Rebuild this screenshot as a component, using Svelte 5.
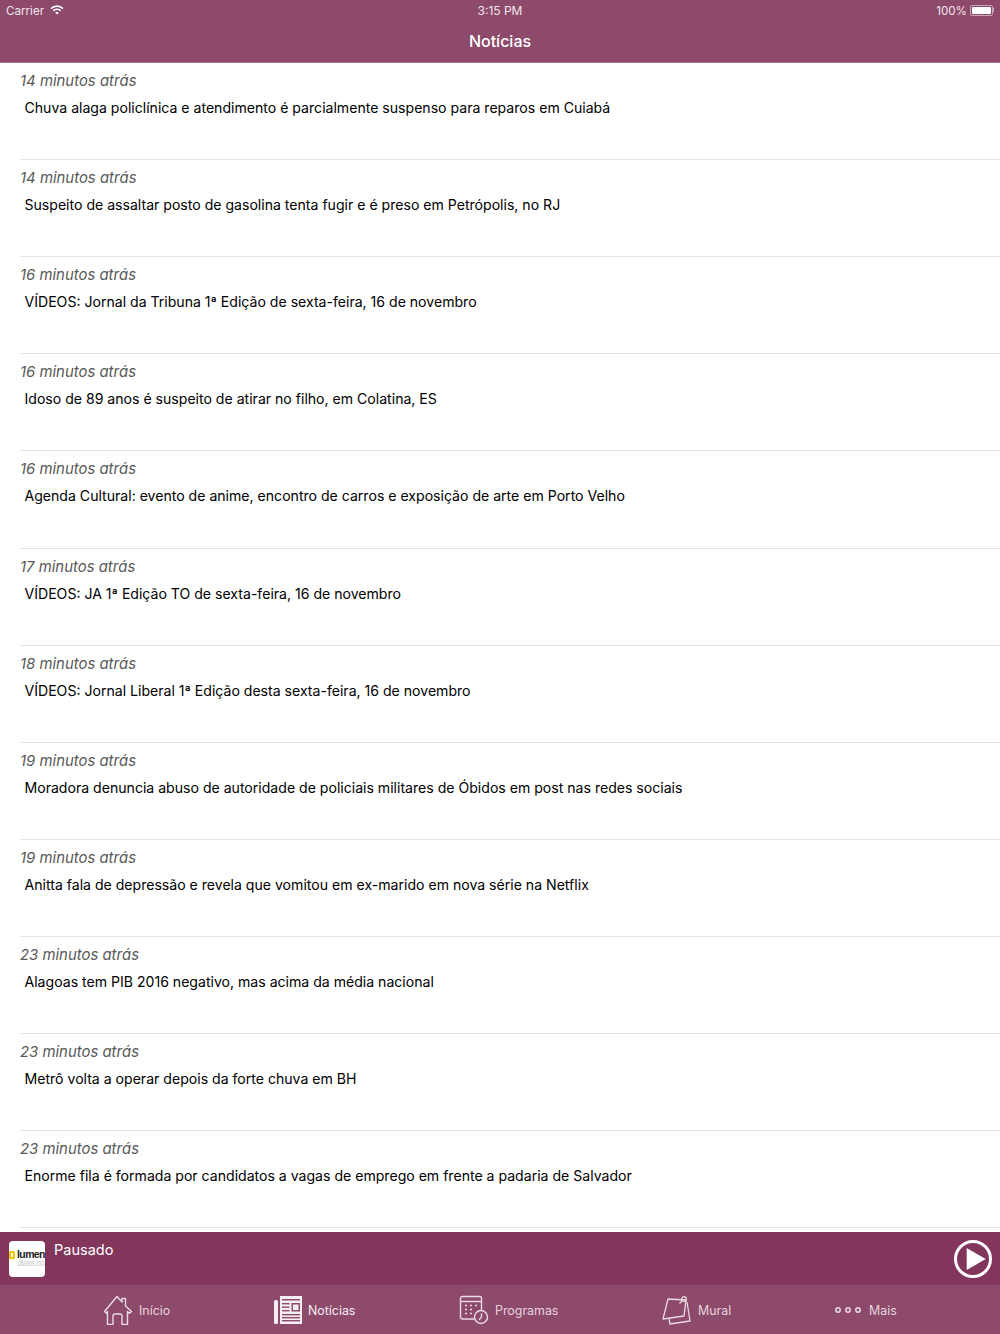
<script>
const news = [
  ["14 minutos atrás", "Chuva alaga policlínica e atendimento é parcialmente suspenso para reparos em Cuiabá"],
  ["14 minutos atrás", "Suspeito de assaltar posto de gasolina tenta fugir e é preso em Petrópolis, no RJ"],
  ["16 minutos atrás", "VÍDEOS: Jornal da Tribuna 1ª Edição de sexta-feira, 16 de novembro"],
  ["16 minutos atrás", "Idoso de 89 anos é suspeito de atirar no filho, em Colatina, ES"],
  ["16 minutos atrás", "Agenda Cultural: evento de anime, encontro de carros e exposição de arte em Porto Velho"],
  ["17 minutos atrás", "VÍDEOS: JA 1ª Edição TO de sexta-feira, 16 de novembro"],
  ["18 minutos atrás", "VÍDEOS: Jornal Liberal 1ª Edição desta sexta-feira, 16 de novembro"],
  ["19 minutos atrás", "Moradora denuncia abuso de autoridade de policiais militares de Óbidos em post nas redes sociais"],
  ["19 minutos atrás", "Anitta fala de depressão e revela que vomitou em ex-marido em nova série na Netflix"],
  ["23 minutos atrás", "Alagoas tem PIB 2016 negativo, mas acima da média nacional"],
  ["23 minutos atrás", "Metrô volta a operar depois da forte chuva em BH"],
  ["23 minutos atrás", "Enorme fila é formada por candidatos a vagas de emprego em frente a padaria de Salvador"]
];
</script>

<div class="screen">
  <header class="top">
    <div class="status">
      <div class="status-left">
        <span class="status-text">Carrier</span>
        <svg width="14" height="10" viewBox="0 0 14 10" fill="none" stroke="#fff" stroke-width="1.6">
          <path d="M1 3.6a8.6 8.6 0 0 1 12 0"/>
          <path d="M3.2 5.8a5.4 5.4 0 0 1 7.6 0"/>
          <path d="M7 9.6 5.2 7.7a2.6 2.6 0 0 1 3.6 0z" fill="#fff" stroke="none"/>
        </svg>
      </div>
      <span class="clock">3:15 PM</span>
      <div class="status-right">
        <span class="status-text">100%</span>
        <span class="battery"><span class="battery-fill"></span></span>
        <span class="battery-tip"></span>
      </div>
    </div>
    <h1>Notícias</h1>
  </header>

  <main class="list">
    {#each news as [time, title]}
      <article class="row">
        <div class="time">{time}</div>
        <div class="title">{title}</div>
      </article>
    {/each}
  </main>

  <section class="player">
    <div class="logo">
      <span class="logo-mark"></span>
      <div class="logo-text">
        <span class="logo-name">lumen</span>
        <span class="logo-sub">dlass.co</span>
      </div>
    </div>
    <span class="paused">Pausado</span>
    <svg class="play" width="40" height="40" viewBox="0 0 40 40">
      <circle cx="20" cy="20" r="17.5" fill="none" stroke="#fff" stroke-width="3"/>
      <path d="M13.7 9 32.7 20 13.7 31z" fill="#fff"/>
    </svg>
  </section>

  <nav class="tabs">
    <div class="tab home">
      <svg width="30" height="30" viewBox="0 0 30 30" fill="none" stroke="#e9dbe3" stroke-width="1.4" stroke-linejoin="round">
        <path d="M1.500 16.500 14 1.500l5 5.500V3.500h3.500V11l6 5.500-2 1.800-2-1.800v13H19V21a2 2 0 0 0-2-2h-5a2 2 0 0 0-2 2v8.500H4.500v-13l-1 1.800z"/>
      </svg>
      <span>Início</span>
    </div>
    <div class="tab news">
      <svg width="28" height="28" viewBox="0 0 28 28">
        <rect x="0" y="4" width="4" height="24" rx="1.500" fill="#f4edf1"/>
        <path d="M6 0h22v28H6z" fill="#f4edf1"/>
        <g fill="#8e4a6b">
          <rect x="8" y="3" width="18" height="1.500"/>
          <rect x="8" y="7" width="7.500" height="1.400"/>
          <rect x="8" y="10.500" width="7.500" height="1.400"/>
          <rect x="8" y="14" width="7.500" height="1.400"/>
          <rect x="8" y="18" width="18" height="1.400"/>
          <rect x="8" y="21" width="18" height="1.400"/>
          <rect x="8" y="24" width="18" height="1.400"/>
          <path fill-rule="evenodd" d="M17.500 7h8.500v8.500h-8.500zM19 8.500v5.500h5.500V8.500z"/>
        </g>
      </svg>
      <span>Notícias</span>
    </div>
    <div class="tab programs">
      <svg width="30" height="30" viewBox="0 0 30 30" fill="none" stroke="#e9dbe3" stroke-width="1.400">
        <path d="M15.500 24H3.500a2 2 0 0 1-2-2V3.500a2 2 0 0 1 2-2h17a2 2 0 0 1 2 2V15.500"/>
        <path d="M1.500 6.500h21"/>
        <path d="M6 10.500h2M11 10.500h2M16 10.500h2M6 14.500h2M11 14.500h2M6 18.500h2M11 18.500h2" stroke-width="1.600"/>
        <circle cx="22" cy="22" r="6.500"/>
        <path d="M22.500 22 20 25M22.500 22v-3.500"/>
      </svg>
      <span>Programas</span>
    </div>
    <div class="tab mural">
      <svg width="30" height="30" viewBox="0 0 30 30" fill="none" stroke="#e9dbe3" stroke-width="1.300" stroke-linejoin="round">
        <path d="M6 4 24 5 22 21 1 24z"/>
        <path d="M25 7 28 26 8 29 7 24"/>
        <circle cx="22" cy="4" r="2.300"/>
        <path d="M20.500 5.500 17.500 8.500"/>
      </svg>
      <span>Mural</span>
    </div>
    <div class="tab more">
      <svg width="28" height="8" viewBox="0 0 28 8" fill="none" stroke="#e9dbe3" stroke-width="1.500">
        <circle cx="4" cy="4" r="2.200"/>
        <circle cx="14" cy="4" r="2.200"/>
        <circle cx="24" cy="4" r="2.200"/>
      </svg>
      <span>Mais</span>
    </div>
  </nav>
</div>

<style>
:global(body) {
  margin: 0;
  background: #fff;
}
.screen {
  display: flex;
  flex-direction: column;
  width: 1000px;
  height: 1334px;
  overflow: hidden;
  font-family: Inter, "Liberation Sans", sans-serif;
}
.top {
  flex: none;
  box-sizing: border-box;
  height: 63px;
  background: #8e4a6b;
  border-bottom: 1px solid #a8708c;
  color: #fff;
}
.status {
  display: flex;
  justify-content: space-between;
  align-items: center;
  height: 20px;
  padding: 0 6px;
  font-size: 11.6px;
  color: #f0e6eb;
  position: relative;
}
.status-left, .status-right {
  display: flex;
  align-items: center;
}
.status-left {
  gap: 6px;
}
.status-text {
  padding-top: 1px;
}
.clock {
  position: absolute;
  left: 0;
  right: 0;
  text-align: center;
  font-size: 12px;
}
.battery {
  display: block;
  box-sizing: border-box;
  width: 23px;
  height: 11px;
  margin-left: 3px;
  padding: 1px;
  border: 1px solid #c9a6b7;
  border-radius: 2px;
}
.battery-fill {
  display: block;
  height: 100%;
  background: #fff;
  border-radius: 1px;
}
.battery-tip {
  width: 1px;
  height: 4px;
  background: #c9a6b7;
}
h1 {
  margin: 0;
  padding-top: 2px;
  text-align: center;
  font-size: 16px;
  line-height: 38px;
  font-weight: 500;
}
.list {
  flex: none;
  height: 1169px;
  overflow: hidden;
}
.row {
  box-sizing: border-box;
  height: 97.11px;
  margin-left: 20px;
  padding-top: 9px;
  border-bottom: 1px solid #e3e3e3;
}
.time {
  font-size: 14.9px;
  line-height: 19px;
  font-style: italic;
  color: #595959;
}
.title {
  margin-top: 7px;
  margin-left: 4.5px;
  font-size: 14.08px;
  line-height: 19px;
  color: #000;
}
.player {
  flex: none;
  display: flex;
  align-items: flex-start;
  height: 53px;
  padding-left: 9px;
  background: #82365c;
  position: relative;
}
.logo {
  display: flex;
  align-items: center;
  box-sizing: border-box;
  flex: none;
  width: 36px;
  height: 36px;
  margin-top: 9px;
  background: #fff;
  border-radius: 4px;
  overflow: hidden;
}
.logo-mark {
  flex: none;
  box-sizing: border-box;
  width: 6px;
  height: 8px;
  margin-top: -8px;
  border: 2px solid #f5c400;
  border-radius: 1px;
}
.logo-text {
  display: flex;
  flex-direction: column;
  margin-left: 2px;
  font-family: "Liberation Sans", sans-serif;
  line-height: 9px;
}
.logo-name {
  font-size: 10.5px;
  font-weight: 700;
  letter-spacing: -0.6px;
  color: #222;
}
.logo-sub {
  font-size: 8.5px;
  letter-spacing: -0.5px;
  color: #ccc;
}
.paused {
  margin: 8px 0 0 9px;
  font-size: 14.5px;
  line-height: 19px;
  color: #fff;
}
.play {
  position: absolute;
  right: 7px;
  top: 7px;
}
.tabs {
  flex: none;
  box-sizing: border-box;
  display: flex;
  align-items: center;
  height: 49px;
  padding: 1px 0 0 103px;
  background: #8e4a6b;
}
.tab {
  display: flex;
  flex: none;
  align-items: center;
  gap: 6px;
  font-size: 12.4px;
  color: #e4d3dc;
}
.home { width: 171px; }
.news { width: 185px; color: #f4edf1; }
.programs { width: 203px; }
.mural { width: 172px; }
.more { gap: 7px; }
</style>
